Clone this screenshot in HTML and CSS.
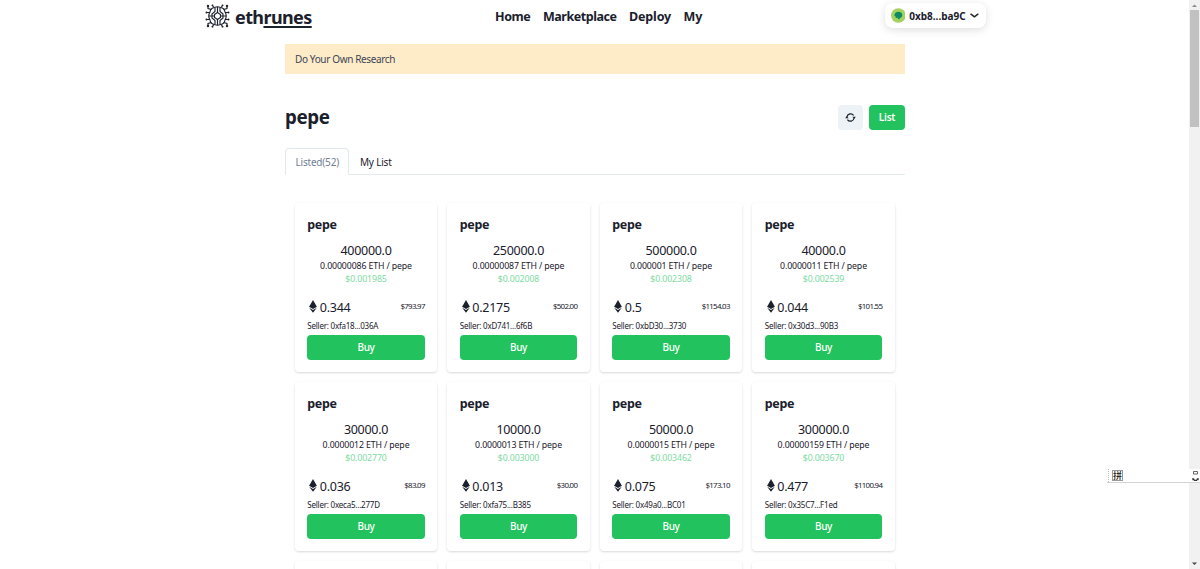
FILE: index.html
```html
<!DOCTYPE html>
<html lang="en">
<head>
<meta charset="utf-8">
<title>ethrunes</title>
<link rel="stylesheet" href="styles.css">
</head>
<body>
<svg width="0" height="0" class="defs">
  <symbol id="eth" viewBox="0 0 8 13"><path d="M4 0 7.900 6.700 4 9 .1 6.700Z"/><path d="M.2 7.700 4 9.900 7.800 7.700 4 12.700Z"/></symbol>
</svg>
<header class="topbar">
  <div class="brand">
    <svg class="logo" viewBox="0 0 26 26" fill="none" stroke="#1d222b" stroke-width="1.15">
      <path d="M10 4.500Q13 3 16 4.500Q20 5 20.500 9Q23 13 20.500 17Q20 21 16 21.500Q13 23 10 21.500Q6 21 5.500 17Q3 13 5.500 9Q6 5 10 4.500Z"/>
      <path d="M13 4v5M13 17v5M10.500 5v3.500L7.500 11v4l3 2.500V21M15.500 5v3.500l3 2.500v4l-3 2.500V21M4.500 13H10M16 13h5.500M10 11.500l3-2 3 2v3l-3 2-3-2Z"/>
      <path d="M7 6.500 3.500 5.500V3M19 6.500l3.500-1V3M7 19.500l-3.500 1V23M19 19.500l3.500 1V23M9.500 4.500 7.500 2M16.500 4.500l2-2.500M9.500 21.500l-2 2.500M16.500 21.500l2 2.500M5.500 9.500H2.500M20.500 9.500h3M5.500 16.500H2.500M20.500 16.500h3"/>
      <g fill="#1d222b" stroke="none"><circle cx="3.500" cy="3" r="1.200"/><circle cx="22.500" cy="3" r="1.200"/><circle cx="3.500" cy="23" r="1.200"/><circle cx="22.500" cy="23" r="1.200"/><circle cx="2" cy="9.500" r="1"/><circle cx="24" cy="9.500" r="1"/><circle cx="2" cy="16.500" r="1"/><circle cx="24" cy="16.500" r="1"/><circle cx="8" cy="2.300" r=".9"/><circle cx="18" cy="2.300" r=".9"/><circle cx="8" cy="23.700" r=".9"/><circle cx="18" cy="23.700" r=".9"/></g>
    </svg>
    <span class="wordmark">eth<u>runes</u></span>
  </div>
  <nav class="nav"><a class="home">Home</a><a class="tight">Marketplace</a><a>Deploy</a><a>My</a></nav>
  <div class="wallet">
    <svg width="15" height="15" viewBox="0 0 15 15"><circle cx="7.500" cy="7.500" r="7.500" fill="#a4d15f"/><path d="M3.700 6.500C4 4.500 5.500 3.700 7.500 3.700s4 1.200 4 3.300c0 1.900-1 2.800-2.400 3L8.500 11.500 7.300 11 7 9.800 4.900 10.300 4.800 8.500 3.400 7.900Z" fill="#0c8a62"/></svg>
    <span>0xb8...ba9C</span>
    <svg width="9" height="5" viewBox="0 0 9 5" fill="none" stroke="#25292e" stroke-width="1.600" stroke-linecap="round" stroke-linejoin="round"><path d="M1 1.200 4.500 3.800 8 1.200"/></svg>
  </div>
</header>
<main class="page">
  <div class="notice">Do Your Own Research</div>
  <div class="heading">
    <h1>pepe</h1>
    <div class="refresh"><svg width="11" height="11" viewBox="0 0 11 11"><g fill="none" stroke="#1a202c" stroke-width="1.200"><path d="M1.900 5A3.700 3.700 0 0 1 8.600 3.400"/><path d="M9.100 6A3.700 3.700 0 0 1 2.400 7.600"/></g><path d="M7.300 4.700h3.600L9.200 6.700ZM.1 6.300h3.600L1.800 4.300Z" fill="#1a202c"/></svg></div>
    <div class="list">List</div>
  </div>
  <div class="tabs"><div class="tab active">Listed(52)</div><div class="tab">My List</div></div>
  <section class="grid">
    <article class="card"><h2>pepe</h2><div class="amount">400000.0</div><div class="rate">0.00000086 ETH / pepe</div><div class="usd">$0.001985</div><div class="total"><svg class="eth"><use href="#eth"/></svg><b>0.344</b><small>$793.97</small></div><div class="seller">Seller: 0xfa18...036A</div><div class="buy">Buy</div></article>
    <article class="card"><h2>pepe</h2><div class="amount">250000.0</div><div class="rate">0.00000087 ETH / pepe</div><div class="usd">$0.002008</div><div class="total"><svg class="eth"><use href="#eth"/></svg><b>0.2175</b><small>$502.00</small></div><div class="seller">Seller: 0xD741...6f6B</div><div class="buy">Buy</div></article>
    <article class="card"><h2>pepe</h2><div class="amount">500000.0</div><div class="rate">0.000001 ETH / pepe</div><div class="usd">$0.002308</div><div class="total"><svg class="eth"><use href="#eth"/></svg><b>0.5</b><small>$1154.03</small></div><div class="seller">Seller: 0xbD30...3730</div><div class="buy">Buy</div></article>
    <article class="card"><h2>pepe</h2><div class="amount">40000.0</div><div class="rate">0.0000011 ETH / pepe</div><div class="usd">$0.002539</div><div class="total"><svg class="eth"><use href="#eth"/></svg><b>0.044</b><small>$101.55</small></div><div class="seller">Seller: 0x30d3...90B3</div><div class="buy">Buy</div></article>
    <article class="card"><h2>pepe</h2><div class="amount">30000.0</div><div class="rate">0.0000012 ETH / pepe</div><div class="usd">$0.002770</div><div class="total"><svg class="eth"><use href="#eth"/></svg><b>0.036</b><small>$83.09</small></div><div class="seller">Seller: 0xeca5...277D</div><div class="buy">Buy</div></article>
    <article class="card"><h2>pepe</h2><div class="amount">10000.0</div><div class="rate">0.0000013 ETH / pepe</div><div class="usd">$0.003000</div><div class="total"><svg class="eth"><use href="#eth"/></svg><b>0.013</b><small>$30.00</small></div><div class="seller">Seller: 0xfa75...B385</div><div class="buy">Buy</div></article>
    <article class="card"><h2>pepe</h2><div class="amount">50000.0</div><div class="rate">0.0000015 ETH / pepe</div><div class="usd">$0.003462</div><div class="total"><svg class="eth"><use href="#eth"/></svg><b>0.075</b><small>$173.10</small></div><div class="seller">Seller: 0x49a0...BC01</div><div class="buy">Buy</div></article>
    <article class="card"><h2>pepe</h2><div class="amount">300000.0</div><div class="rate">0.00000159 ETH / pepe</div><div class="usd">$0.003670</div><div class="total"><svg class="eth"><use href="#eth"/></svg><b>0.477</b><small>$1100.94</small></div><div class="seller">Seller: 0x35C7...F1ed</div><div class="buy">Buy</div></article>
    <article class="card peek"></article><article class="card peek"></article><article class="card peek"></article><article class="card peek"></article>
  </section>
</main>
<aside class="scrollbar">
  <svg width="11" height="10" viewBox="0 0 11 10"><path d="M3 7 5.500 4.500 8 7Z" fill="#8a8a8a"/></svg>
  <div class="thumb"></div>
  <svg width="11" height="10" viewBox="0 0 11 10"><path d="M3 3.500h5L5.500 6Z" fill="#444"/></svg>
</aside>
<div class="ime">
  <span class="grip"></span><span class="mode">拼</span>
  <svg width="7" height="12" viewBox="0 0 7 12" fill="none" stroke="#333"><path d="M1.500 1.500h4v2.500h-4Z" stroke="#666"/><path d="M1 8v1.500h1.500M6 8v1.500H4.500M2 10.300h3" stroke-width="1.300"/></svg>
</div>
</body>
</html>
```
FILE: styles.css
```css
* { box-sizing: border-box; }
html, body { height: 569px; overflow: hidden; }
body { margin: 0; background: #fff; color: #1a202c; font-family: "Noto Sans", "Noto Sans CJK SC", sans-serif; font-size: 10px; white-space: nowrap; position: relative; }
h1, h2 { margin: 0; font-weight: 700; }
.defs { position: absolute; }
.topbar { width: 781.500px; height: 34px; margin-left: 204px; display: grid; grid-template-columns: 291px 1fr 101px; align-items: start; }
.brand { display: flex; align-items: center; gap: 4px; height: 32px; }
.logo { width: 27px; height: 26px; margin-top: -1px; }
.wordmark { font: 700 18px/30px "Noto Sans", sans-serif; margin-top: 1px; letter-spacing: -.6px; }
.wordmark u { text-decoration-thickness: 1.500px; text-underline-offset: 2px; }
.nav { display: flex; gap: 12.500px; font-size: 12.500px; font-weight: 700; line-height: 34px; letter-spacing: -.15px; }
.nav .home { letter-spacing: -.4px; }
.nav .tight { letter-spacing: -.45px; }
.wallet { height: 25px; margin-top: 3px; padding: 0 7px 0 6px; border-radius: 8px; box-shadow: 0 2px 8px rgba(0,0,0,.13); display: flex; align-items: center; gap: 4px; font-size: 10px; font-weight: 700; }
.wallet span { flex: 1; }
.page { width: 620px; margin-left: 285px; }
.notice { height: 30px; margin-top: 10px; padding-left: 10px; background: #feebc8; color: #3d4657; font-size: 10px; letter-spacing: -.36px; line-height: 30px; }
.heading { height: 26px; margin-top: 30px; display: flex; align-items: center; gap: 6.500px; }
.heading h1 { flex: 1; font-size: 18.750px; letter-spacing: -.4px; line-height: 28px; }
.refresh, .list { height: 25px; border-radius: 4px; display: flex; align-items: center; justify-content: center; }
.refresh { width: 25px; background: #edf2f7; }
.list { width: 36px; background: #22c35e; color: #fff; font-weight: 600; letter-spacing: -.2px; }
.tabs { display: flex; height: 27px; margin-top: 18px; border-bottom: 1px solid #e2e8f0; }
.tab { padding: 0 11px; line-height: 29px; height: 27px; font-size: 10px; letter-spacing: -.2px; }
.active { width: 64px; color: #718096; border: 1px solid #e2e8f0; border-bottom-color: #fff; border-radius: 4px 4px 0 0; line-height: 27px; padding: 0 9.500px; }
.grid { height: 394px; overflow: hidden; padding: 28px 9.750px 0; display: grid; grid-template-columns: repeat(4, 142.500px); align-content: start; gap: 9.750px 10px; }
.card { height: 169.250px; padding: 12.500px 12.500px 0; border-radius: 4px; box-shadow: 0 1px 3px rgba(0,0,0,.1), 0 1px 2px rgba(0,0,0,.06); }
.peek { height: 20px; }
.card h2 { font-size: 12.500px; line-height: 18px; letter-spacing: -.3px; }
.amount, .rate, .usd { text-align: center; }
.amount { margin-top: 8px; font-size: 12.500px; line-height: 18px; letter-spacing: -.3px; }
.rate { font-size: 8.750px; line-height: 13px; letter-spacing: -.12px; }
.usd { color: #7ddc9f; font-size: 8.750px; line-height: 13px; letter-spacing: -.1px; }
.total { height: 19px; margin-top: 11px; display: flex; align-items: center; }
.eth { width: 8px; height: 13px; margin: 0 2px; fill: #1a202c; }
.total b { flex: 1; font-weight: 400; font-size: 12.500px; line-height: 19px; letter-spacing: -.25px; margin: 2px 0 0 .5px; }
.total small { font-size: 7.900px; line-height: 12px; letter-spacing: -.7px; }
.seller { margin-top: 3px; font-size: 8px; line-height: 14px; letter-spacing: -.22px; }
.buy { margin-top: 2px; height: 25px; border-radius: 4px; background: #22c35e; color: #fff; font-size: 10px; font-weight: 500; letter-spacing: -.3px; line-height: 25px; text-align: center; }
.scrollbar { position: absolute; top: 0; right: 0; width: 11px; height: 569px; background: #f1f1f1; display: flex; flex-direction: column; }
.thumb { width: 9px; height: 117px; margin: 0 1px auto; background: #c1c1c1; }
.ime { position: absolute; left: 1107px; top: 469px; width: 93px; height: 14px; background: #fff; border-bottom: 1px solid #d4d4d4; display: flex; align-items: center; }
.grip { height: 13px; border-left: 1px dotted #bbb; margin: 0 3px 0 1px; }
.mode { width: 11px; height: 11px; margin-right: auto; border: 1px solid #999; font: 500 9px/9px "Noto Sans CJK SC", sans-serif; display: flex; justify-content: center; color: #111; }
.ime svg { margin-right: 1px; }
```
